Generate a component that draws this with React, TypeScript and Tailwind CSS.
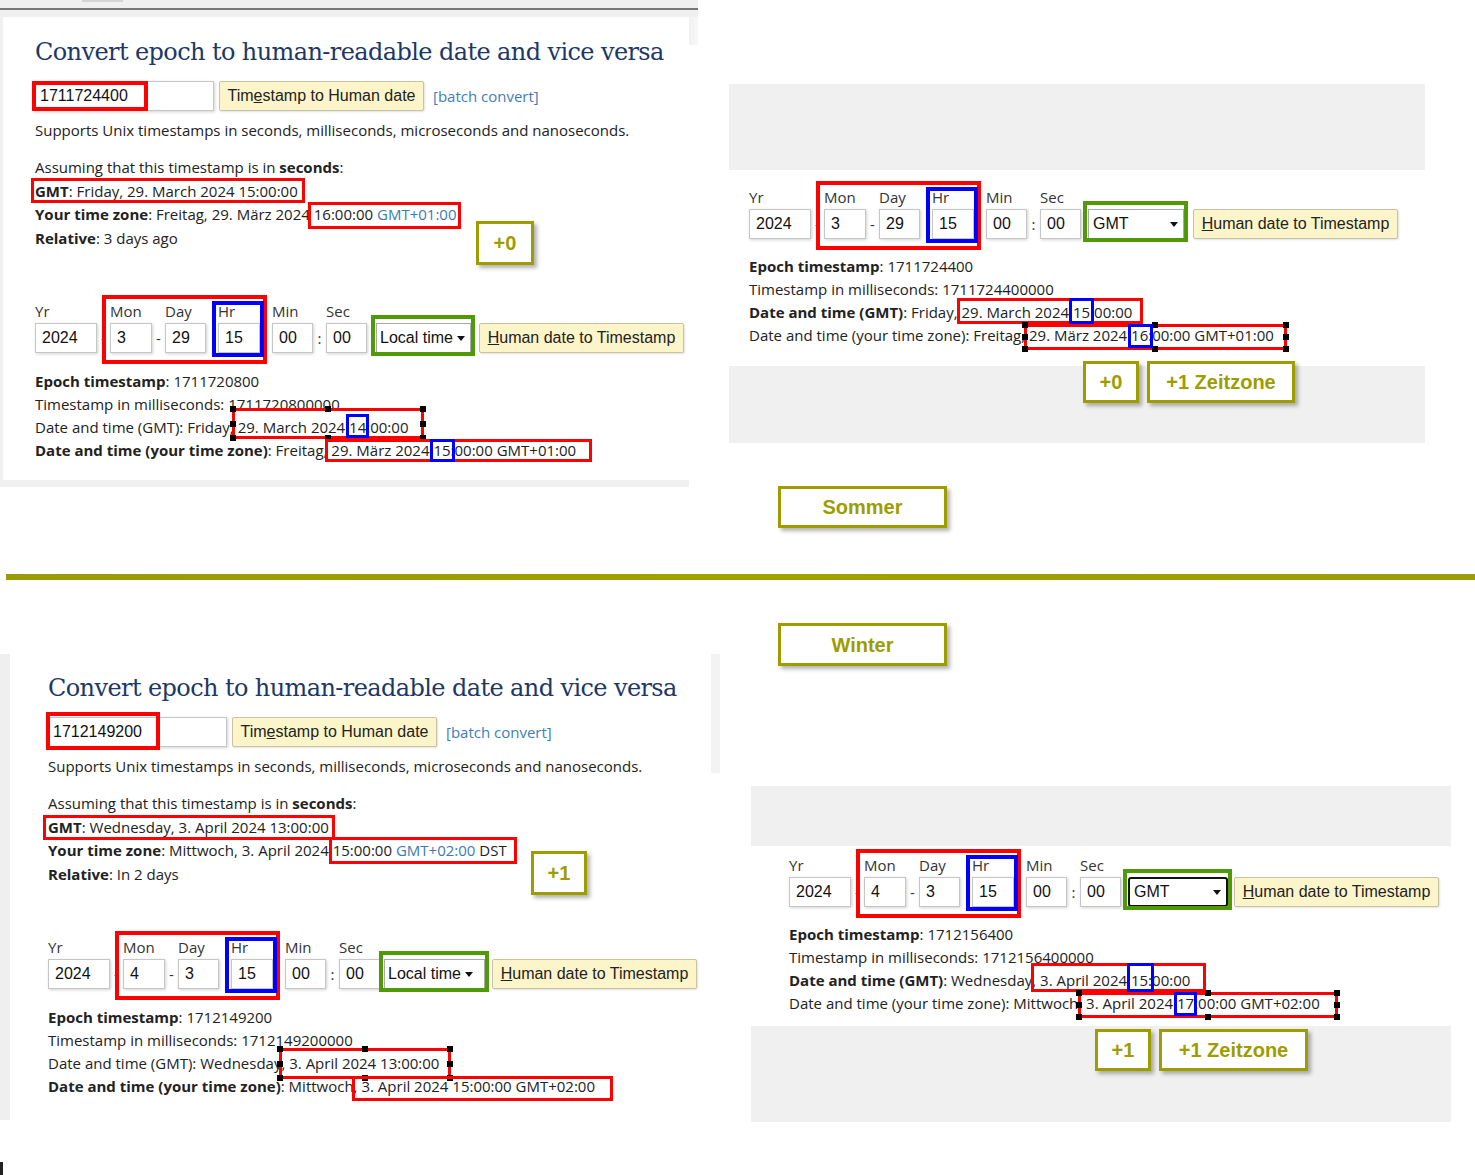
import React from 'react';

const RED = 'absolute border-[3px] border-[#ff0000]';
const BLUE = 'absolute border-[3px] border-[#0000ff]';
const INPUT =
  "h-[30px] border border-[#c6c6c6] bg-white shadow-[1px_1px_3px_rgba(0,0,0,0.18)] font-['Liberation_Sans',Arial,sans-serif] text-[16px] text-[#111] pl-[6px] flex items-center";
const OLIVE =
  "border-[3px] border-[#9d9d00] bg-white shadow-[3px_3px_4px_rgba(0,0,0,0.3)] flex items-center justify-center font-['Liberation_Sans',Arial,sans-serif] font-bold text-[20px] text-[#9d9d00]";
const YBTN =
  "h-[30px] bg-[#fcf5c9] border border-[#c8c4a2] rounded-[2px] font-['Liberation_Sans',Arial,sans-serif] text-[16px] text-[#222] flex items-center justify-center shadow-[1px_1px_2px_rgba(0,0,0,0.12)]";

function Handles() {
  const h = 'absolute w-[6px] h-[6px] bg-black';
  return (
    <>
      <span className={`${h} -left-[5px] -top-[5px]`} />
      <span className={`${h} left-[calc(50%-3px)] -top-[5px]`} />
      <span className={`${h} -right-[5px] -top-[5px]`} />
      <span className={`${h} -left-[5px] top-[calc(50%-3px)]`} />
      <span className={`${h} -right-[5px] top-[calc(50%-3px)]`} />
      <span className={`${h} -left-[5px] -bottom-[5px]`} />
      <span className={`${h} left-[calc(50%-3px)] -bottom-[5px]`} />
      <span className={`${h} -right-[5px] -bottom-[5px]`} />
    </>
  );
}

function Field({ label, value, w }: { label: string; value: string; w: string }) {
  return (
    <div className="flex flex-col">
      <div className="h-[20px] leading-[20px] mb-[2px] text-[15px] text-[#333]">{label}</div>
      <div className={`${w} ${INPUT}`}>{value}</div>
    </div>
  );
}

function Sep({ ch, w }: { ch: string; w: string }) {
  return (
    <div className={`${w} h-[30px] flex items-center justify-center text-[15px] text-[#333]`}>{ch}</div>
  );
}

function LocalSelect({ w }: { w: string }) {
  return (
    <div
      className={`${w} h-[30px] border border-[#a9a9a9] bg-white flex items-center pl-[3px] gap-[4px] font-['Liberation_Sans',Arial,sans-serif] text-[16px] text-[#111]`}
    >
      Local time
      <span className="w-0 h-0 border-x-[4px] border-x-transparent border-t-[5px] border-t-[#111]" />
    </div>
  );
}

function GmtSelect({ w, focus }: { w: string; focus?: boolean }) {
  return (
    <div
      className={`${w} h-[30px] bg-white flex items-center justify-between pl-[4px] pr-[5px] font-['Liberation_Sans',Arial,sans-serif] text-[16px] text-[#111] ${
        focus ? 'border-[2px] border-[#111] rounded-[3px]' : 'border border-[#a9a9a9]'
      }`}
    >
      GMT
      <span className="w-0 h-0 border-x-[4px] border-x-transparent border-t-[5px] border-t-[#111]" />
    </div>
  );
}

function DateForm({
  mon,
  day,
  select,
  selGap,
  btnGap,
}: {
  mon: string;
  day: string;
  select: React.ReactNode;
  selGap: string;
  btnGap: string;
}) {
  return (
    <div className="flex items-end">
      <Field label="Yr" value="2024" w="w-[62px]" />
      <Sep ch="-" w="w-[13px]" />
      <div className="relative flex items-end">
        <span className={`${RED} border-[4px] -left-[8px] -right-[7px] -top-[6px] -bottom-[11px]`} />
        <Field label="Mon" value={mon} w="w-[42px]" />
        <Sep ch="-" w="w-[13px]" />
        <Field label="Day" value={day} w="w-[41px]" />
        <Sep ch="" w="w-[12px]" />
        <div className="relative">
          <Field label="Hr" value="15" w="w-[42px]" />
          <span className={`${BLUE} border-[4px] -left-[6px] -right-[4px] top-0 -bottom-[4px]`} />
        </div>
      </div>
      <Sep ch="" w="w-[12px]" />
      <Field label="Min" value="00" w="w-[41px]" />
      <Sep ch=":" w="w-[13px]" />
      <Field label="Sec" value="00" w="w-[41px]" />
      <div className={`relative ${selGap}`}>
        {select}
        <span className="absolute border-[4px] border-[#4f9a06] -left-[5px] -right-[4px] -top-[8px] -bottom-[3px]" />
      </div>
      <div className={`${YBTN} ${btnGap} w-[205px]`}>
        <span>
          <u>H</u>uman date to Timestamp
        </span>
      </div>
    </div>
  );
}

function Heading() {
  return (
    <h1 className="font-['DejaVu_Serif','Liberation_Serif',serif] text-[24px] tracking-[-0.6px] leading-[32px] text-[#1d3866]">
      Convert epoch to human-readable date and vice versa
    </h1>
  );
}

function TsRow({ value, box }: { value: string; box: string }) {
  return (
    <div className="mt-[13px] -ml-[2px] flex items-center">
      <div className={`relative w-[181px] ${INPUT}`}>
        {value}
        <span className={`${RED} border-[4px] ${box}`} />
      </div>
      <div className={`${YBTN} ml-[5px] w-[205px]`}>
        <span>
          Tim<u>e</u>stamp to Human date
        </span>
      </div>
      <span className="ml-[9px] text-[15px] text-[#3e7eb6]">[batch convert]</span>
    </div>
  );
}

export default function App() {
  return (
    <div className="relative w-[1475px] h-[1175px] overflow-hidden bg-white font-['Open_Sans',sans-serif] text-[15px] text-[#222]">
      {/* TOP SECTION */}
      <div className="flex h-[574px]">
        {/* top-left screenshot */}
        <div className="relative w-[698px] shrink-0">
          <div className="h-[17px] bg-[#f0f0f0]">
            <div className="ml-[82px] w-[41px] h-[2px] bg-[#d4d4d4]" />
            <div className="mt-[6px] h-[2px] bg-[#777]" />
          </div>
          <div className="flex">
            <div className="w-[3px] bg-[#f0f0f0]" />
            <div className="w-[686px] bg-white pt-[19px] pl-[32px] pb-[18px]">
              <Heading />
              <TsRow value="1711724400" box="-left-[2px] -top-[1px] -bottom-[1px] w-[116px]" />
              <div className="mt-[8px] leading-[23px]">
                Supports Unix timestamps in seconds, milliseconds, microseconds and nanoseconds.
              </div>
              <div className="mt-[14px] leading-[23.5px]">
                <div>
                  Assuming that this timestamp is in <b>seconds</b>:
                </div>
                <div>
                  <span className="relative inline-block">
                    <b>GMT</b>: Friday, 29. March 2024 15:00:00
                    <span className={`${RED} -left-[4px] -right-[7px] -top-[2px] bottom-0`} />
                  </span>
                </div>
                <div>
                  <b>Your time zone</b>: Freitag, 29. März 2024{' '}
                  <span className="relative inline-block">
                    16:00:00 <span className="text-[#3a7bb3]">GMT+01:00</span>
                    <span className={`${RED} -left-[6px] -right-[5px] -top-[1px] -bottom-[2px]`} />
                  </span>
                </div>
                <div>
                  <b>Relative</b>: 3 days ago
                </div>
              </div>
              <div className="mt-[51px]">
                <DateForm
                  mon="3"
                  day="29"
                  select={<LocalSelect w="w-[95px]" />}
                  selGap="ml-[9px]"
                  btnGap="ml-[8px]"
                />
              </div>
              <div className="mt-[17px] leading-[23px]">
                <div>
                  <b>Epoch timestamp</b>: 1711720800
                </div>
                <div>Timestamp in milliseconds: 1711720800000</div>
                <div>
                  Date and time (GMT): Friday,{' '}
                  <span className="relative inline-block">
                    <span className={`${RED} -left-[6px] -right-[16px] -top-[8px] bottom-0`}>
                      <Handles />
                    </span>
                    29. March 2024{' '}
                    <span className="relative inline-block">
                      14
                      <span className={`${BLUE} -left-[3px] -right-[3px] -top-[2px] bottom-[1px]`} />
                    </span>
                    :00:00
                  </span>
                </div>
                <div>
                  <b>Date and time (your time zone)</b>: Freitag,{' '}
                  <span className="relative inline-block">
                    <span className={`${RED} -left-[6px] -right-[16px] top-0 bottom-0`} />
                    29. März 2024{' '}
                    <span className="relative inline-block">
                      15
                      <span className={`${BLUE} -left-[3px] -right-[4px] top-0 bottom-0`} />
                    </span>
                    :00:00 GMT+01:00
                  </span>
                </div>
              </div>
            </div>
            <div className="w-[9px]">
              <div className="h-[28px] bg-gradient-to-r from-[#f0f0f0] to-[#f8f8f8]" />
            </div>
          </div>
          <div className="w-[689px] h-[7px] bg-[#f0f0f0]" />
          <div className={`${OLIVE} absolute left-[476px] top-[221px] w-[58px] h-[44px]`}>+0</div>
        </div>

        {/* top-right screenshot */}
        <div className="flex-1 pl-[31px]">
          <div className="mt-[84px] w-[696px] h-[86px] bg-[#f0f0f0]" />
          <div className="pl-[20px] mt-[17px]">
            <DateForm
              mon="3"
              day="29"
              select={<GmtSelect w="w-[96px]" />}
              selGap="ml-[7px]"
              btnGap="ml-[9px]"
            />
          </div>
          <div className="pl-[20px] mt-[16px] leading-[23px]">
            <div>
              <b>Epoch timestamp</b>: 1711724400
            </div>
            <div>Timestamp in milliseconds: 1711724400000</div>
            <div>
              <b>Date and time (GMT)</b>: Friday,{' '}
              <span className="relative inline-block">
                <span className={`${RED} -left-[5px] -right-[11px] -top-[3px] bottom-0`} />
                29. March 2024{' '}
                <span className="relative inline-block">
                  15
                  <span className={`${BLUE} -left-[4px] -right-[4px] -top-[3px] bottom-0`} />
                </span>
                :00:00
              </span>
            </div>
            <div>
              Date and time (your time zone): Freitag,{' '}
              <span className="relative inline-block">
                <span className={`${RED} -left-[5px] -right-[13px] top-0 -bottom-[3px]`}>
                  <Handles />
                </span>
                29. März 2024{' '}
                <span className="relative inline-block">
                  16
                  <span className={`${BLUE} -left-[3px] -right-[5px] top-0 -bottom-[1px]`} />
                </span>
                :00:00 GMT+01:00
              </span>
            </div>
          </div>
          <div className="relative mt-[19px] w-[696px] h-[77px] bg-[#f0f0f0]">
            <div className="absolute left-[354px] -top-[5px] flex gap-[8px]">
              <div className={`${OLIVE} w-[56px] h-[42px]`}>+0</div>
              <div className={`${OLIVE} w-[148px] h-[42px]`}>+1 Zeitzone</div>
            </div>
          </div>
          <div className={`${OLIVE} mt-[43px] ml-[49px] w-[169px] h-[42px]`}>Sommer</div>
        </div>
      </div>

      {/* divider */}
      <div className="ml-[6px] h-[6px] bg-gradient-to-r from-[#9a9a06] via-[#a0a000] to-[#9c9c08]" />

      {/* BOTTOM SECTION */}
      <div className="flex">
        <div className="relative w-[720px] shrink-0 pt-[74px]">
          <div className="flex">
            <div className="w-[10px] bg-[#efefef]" />
            <div className="w-[701px] bg-white pt-[18px] pl-[38px] pb-[22px]">
              <Heading />
              <TsRow value="1712149200" box="-left-[1px] -top-[6px] -bottom-[4px] w-[114px]" />
              <div className="mt-[8px] leading-[23px]">
                Supports Unix timestamps in seconds, milliseconds, microseconds and nanoseconds.
              </div>
              <div className="mt-[14px] leading-[23.5px]">
                <div>
                  Assuming that this timestamp is in <b>seconds</b>:
                </div>
                <div>
                  <span className="relative inline-block">
                    <b>GMT</b>: Wednesday, 3. April 2024 13:00:00
                    <span className={`${RED} -left-[5px] -right-[6px] -top-[1px] -bottom-[1px]`} />
                  </span>
                </div>
                <div>
                  <b>Your time zone</b>: Mittwoch, 3. April 2024{' '}
                  <span className="relative inline-block">
                    15:00:00 <span className="text-[#3a7bb3]">GMT+02:00</span> DST
                    <span className={`${RED} -left-[4px] -right-[10px] -top-[2px] -bottom-[1px]`} />
                  </span>
                </div>
                <div>
                  <b>Relative</b>: In 2 days
                </div>
              </div>
              <div className="mt-[51px]">
                <DateForm
                  mon="4"
                  day="3"
                  select={<LocalSelect w="w-[101px]" />}
                  selGap="ml-[4px]"
                  btnGap="ml-[7px]"
                />
              </div>
              <div className="mt-[17px] leading-[23px]">
                <div>
                  <b>Epoch timestamp</b>: 1712149200
                </div>
                <div>Timestamp in milliseconds: 1712149200000</div>
                <div>
                  Date and time (GMT): Wednesday,{' '}
                  <span className="relative inline-block">
                    <span className={`${RED} -left-[10px] -right-[12px] -top-[4px] -bottom-[4px]`}>
                      <Handles />
                    </span>
                    3. April 2024 13:00:00
                  </span>
                </div>
                <div>
                  <b>Date and time (your time zone)</b>: Mittwoch,{' '}
                  <span className="relative inline-block">
                    <span className={`${RED} -left-[9px] -right-[18px] top-[1px] -bottom-[3px]`} />
                    3. April 2024 15:00:00 GMT+02:00
                  </span>
                </div>
              </div>
            </div>
            <div className="w-[9px]">
              <div className="h-[119px] bg-[#f3f3f3]" />
            </div>
          </div>
          <div className={`${OLIVE} absolute left-[531px] top-[271px] w-[56px] h-[44px]`}>+1</div>
        </div>

        <div className="flex-1 pl-[31px]">
          <div className={`${OLIVE} mt-[43px] ml-[27px] w-[169px] h-[43px]`}>Winter</div>
          <div className="mt-[120px] w-[700px] h-[60px] bg-[#f0f0f0]" />
          <div className="pl-[38px] mt-[9px]">
            <DateForm
              mon="4"
              day="3"
              select={<GmtSelect w="w-[100px]" focus />}
              selGap="ml-[7px]"
              btnGap="ml-[6px]"
            />
          </div>
          <div className="pl-[38px] mt-[16px] leading-[23px]">
            <div>
              <b>Epoch timestamp</b>: 1712156400
            </div>
            <div>Timestamp in milliseconds: 1712156400000</div>
            <div>
              <b>Date and time (GMT)</b>: Wednesday,{' '}
              <span className="relative inline-block">
                <span className={`${RED} -left-[9px] -right-[16px] -top-[6px] bottom-0`} />
                3. April 2024{' '}
                <span className="relative inline-block">
                  15
                  <span className={`${BLUE} -left-[4px] -right-[6px] -top-[6px] bottom-0`} />
                </span>
                :00:00
              </span>
            </div>
            <div>
              Date and time (your time zone): Mittwoch,{' '}
              <span className="relative inline-block">
                <span className={`${RED} -left-[8px] -right-[18px] top-0 -bottom-[3px]`}>
                  <Handles />
                </span>
                3. April 2024{' '}
                <span className="relative inline-block">
                  17
                  <span className={`${BLUE} -left-[3px] -right-[3px] top-0 -bottom-[1px]`} />
                </span>
                :00:00 GMT+02:00
              </span>
            </div>
          </div>
          <div className="relative mt-[11px] w-[700px] h-[96px] bg-[#f0f0f0]">
            <div className="absolute left-[344px] top-[3px] flex gap-[8px]">
              <div className={`${OLIVE} w-[56px] h-[42px]`}>+1</div>
              <div className={`${OLIVE} w-[149px] h-[42px]`}>+1 Zeitzone</div>
            </div>
          </div>
        </div>
      </div>

      <div className="absolute left-0 top-[1162px] w-[3px] h-[13px] bg-[#222]" />
    </div>
  );
}
